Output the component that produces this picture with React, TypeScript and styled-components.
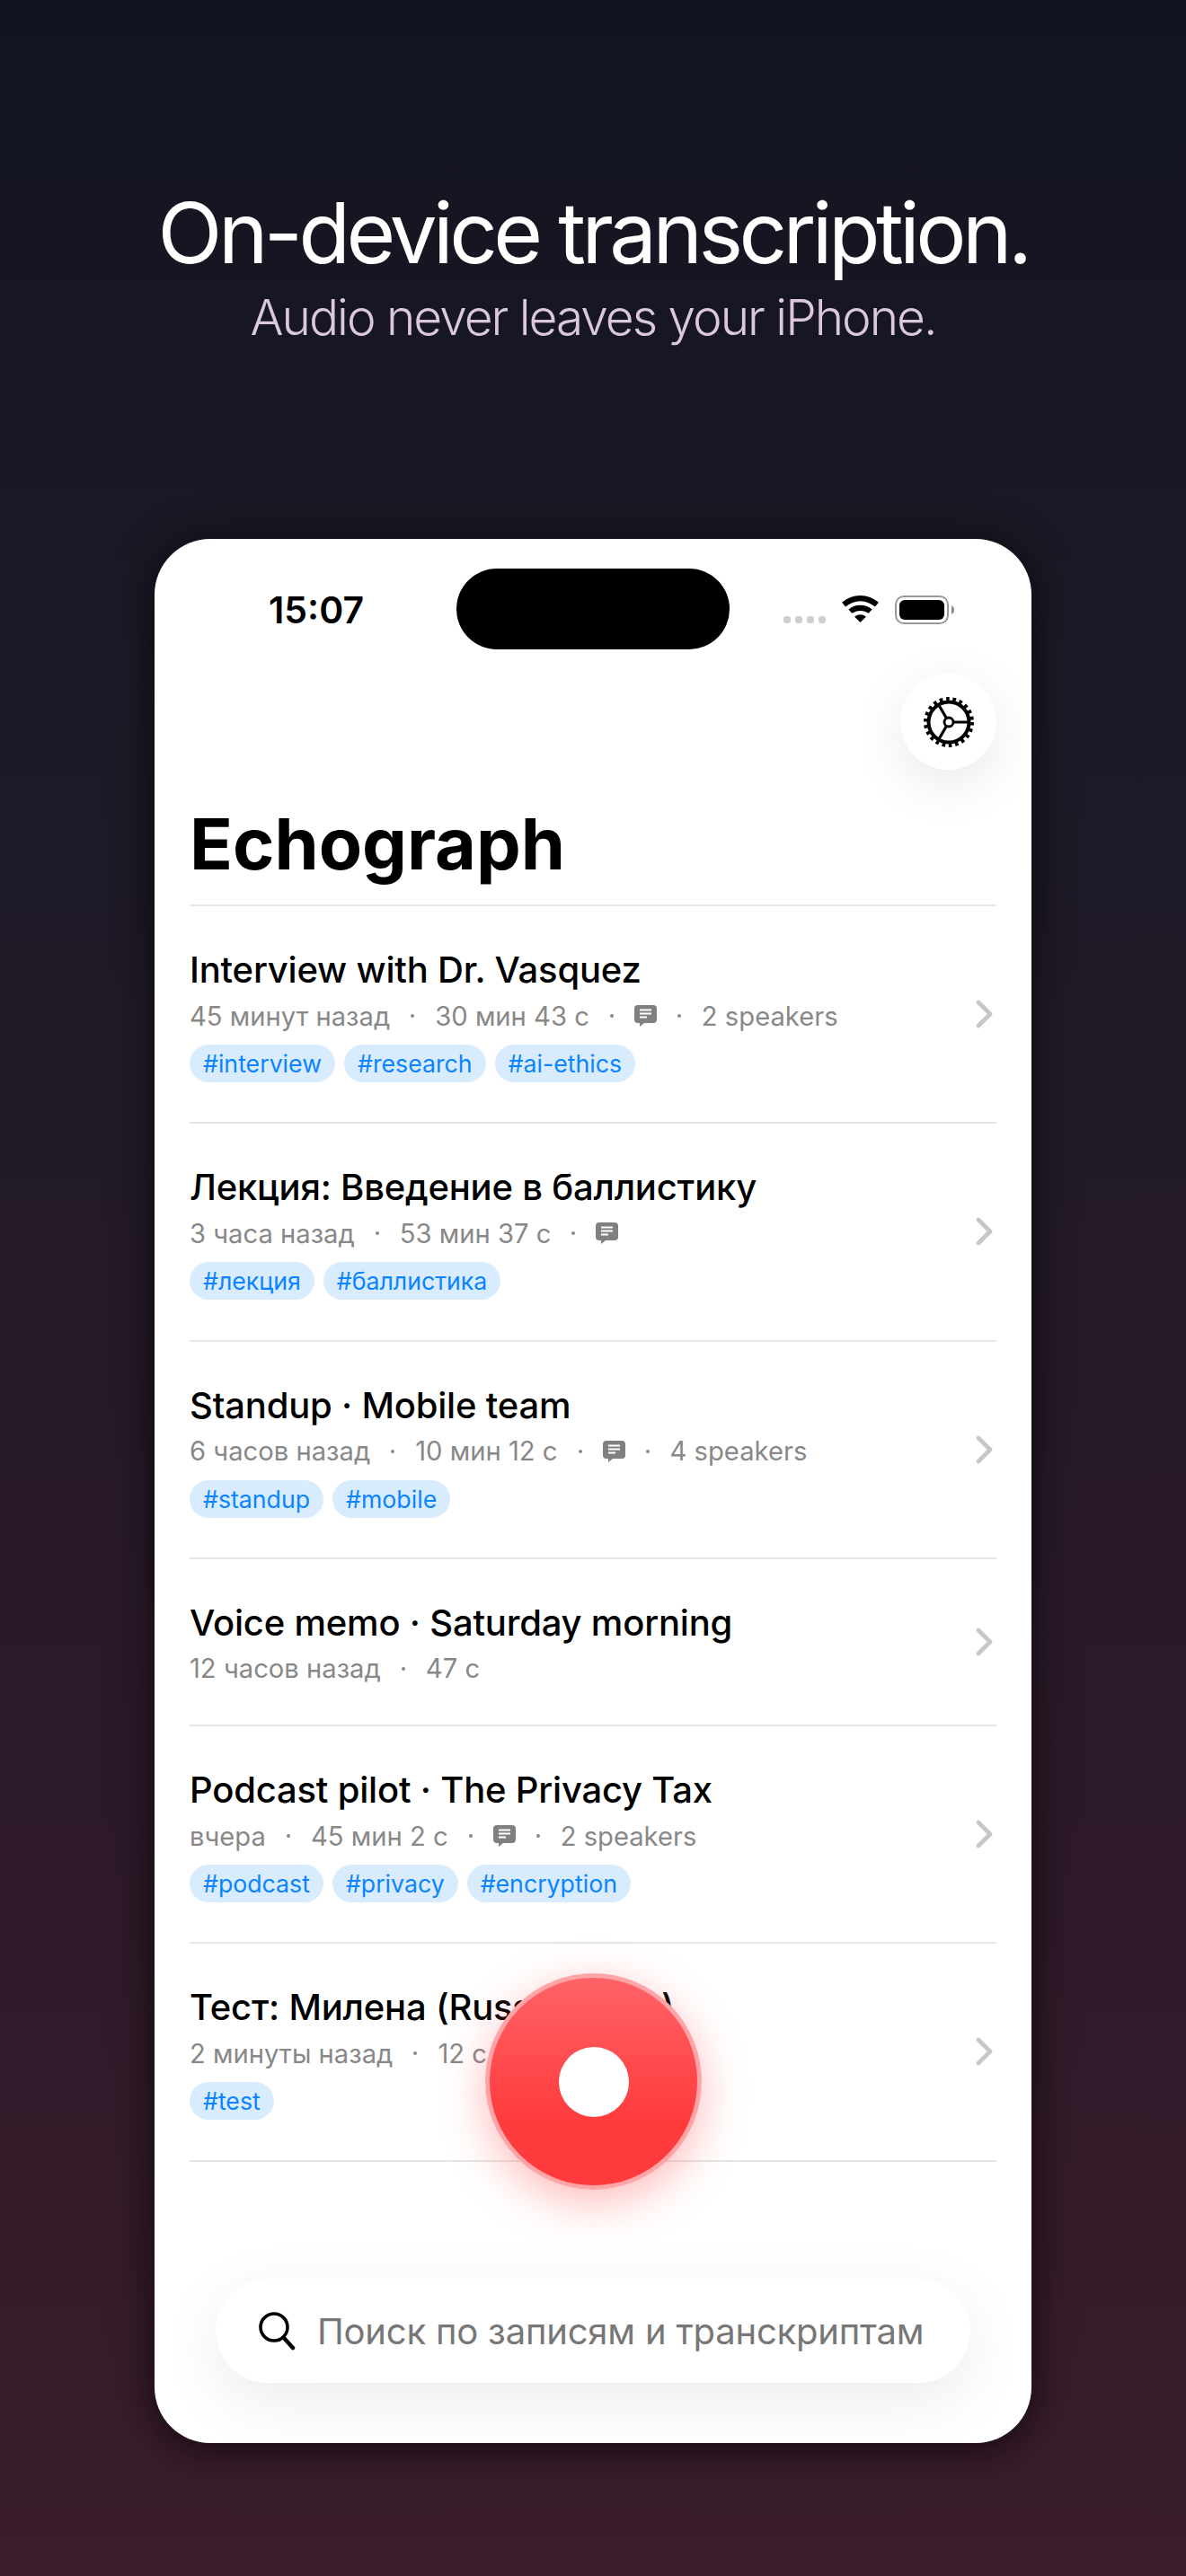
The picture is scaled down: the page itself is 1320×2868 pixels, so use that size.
import React from "react";
import styled, { createGlobalStyle } from "styled-components";

const GlobalStyle = createGlobalStyle`
  html, body {
    margin: 0;
    padding: 0;
  }
  body {
    font-family: Inter, "Noto Sans", sans-serif;
    background: #14161f;
  }
  * {
    box-sizing: border-box;
  }
`;

const Page = styled.div`
  width: 1320px;
  height: 2868px;
  overflow: hidden;
  display: flex;
  flex-direction: column;
  align-items: center;
  background: linear-gradient(180deg, #12141f 0%, #1b1a27 25%, #2d1a29 70%, #3b1d2c 100%);
`;

const Hero = styled.header`
  height: 600px;
  padding-top: 202px;
  text-align: center;
`;

const Headline = styled.h1`
  margin: 0;
  color: #fff;
  font-size: 94px;
  font-weight: 400;
  line-height: 114px;
  letter-spacing: -4.6px;
  white-space: nowrap;
`;

const Subline = styled.p`
  margin: 4px 0 0;
  color: #dcc8dc;
  font-size: 55px;
  font-weight: 350;
  line-height: 66px;
  letter-spacing: -2px;
  white-space: nowrap;
`;

const Phone = styled.main`
  position: relative;
  width: 976px;
  height: 2120px;
  flex: none;
  padding: 0 39px;
  background: #fff;
  border-radius: 62px;
  overflow: hidden;
  box-shadow: 0 6px 48px rgba(0, 0, 0, 0.7);
`;

const StatusBar = styled.div`
  display: grid;
  grid-template-columns: 1fr 304px 1fr;
  height: 123px;
  padding-top: 33px;
  margin: 0 -39px;
`;

const Clock = styled.span`
  padding: 24px 0 0 127px;
  font-size: 41px;
  font-weight: 600;
  line-height: 44px;
  color: #000;
`;

const Island = styled.div`
  height: 90px;
  border-radius: 45px;
  background: #000;
`;

const StatusIcons = styled.div`
  display: flex;
  align-items: flex-start;
  padding: 30px 0 0 60px;
`;

const SignalDots = styled.div`
  display: flex;
  gap: 5px;
  margin: 23px 18px 0 0;
`;

const SignalDot = styled.span`
  width: 8px;
  height: 8px;
  border-radius: 3px;
  background: #cfcfcf;
`;

const Toolbar = styled.div`
  display: flex;
  justify-content: flex-end;
  padding-top: 27px;
`;

const SettingsButton = styled.button`
  width: 107px;
  height: 107px;
  padding: 0;
  border: 0;
  border-radius: 50%;
  display: flex;
  align-items: center;
  justify-content: center;
  background: #fff;
  box-shadow: 0 16px 60px rgba(0, 0, 0, 0.09);
`;

const Title = styled.h2`
  margin: 35px 0 0;
  height: 117px;
  font-size: 79px;
  font-weight: 700;
  line-height: 94px;
  color: #000;
  border-bottom: 2px solid #e6e6e6;
`;

const Row = styled.div`
  display: flex;
  align-items: center;
  justify-content: space-between;
  padding: 44px 0 44.3px;
  border-bottom: 2px solid #e6e6e6;
`;

const RowBody = styled.div`
  min-width: 0;
`;

const RowTitle = styled.div`
  font-size: 40px;
  font-weight: 450;
  line-height: 54px;
  letter-spacing: -0.2px;
  color: #000;
  white-space: nowrap;
`;

const Meta = styled.div`
  display: flex;
  align-items: center;
  gap: 23px;
  margin-top: 6px;
  height: 36px;
  font-size: 29.2px;
  color: #888;
  white-space: nowrap;
`;

const MetaDot = styled.span`
  width: 4px;
  height: 4px;
  border-radius: 50%;
  background: #888;
`;

const Tags = styled.div`
  display: flex;
  gap: 10px;
  margin-top: 14px;
`;

const Tag = styled.span`
  height: 42px;
  padding: 0 15px;
  border-radius: 21px;
  background: #d9ecfe;
  color: #0a84ff;
  font-size: 26.7px;
  line-height: 42px;
  white-space: nowrap;
`;

const ChevronMark = styled.svg`
  margin-right: 3px;
  flex: none;
`;

const RecordButton = styled.button`
  position: absolute;
  left: 368px;
  top: 1597px;
  width: 241px;
  height: 241px;
  padding: 0;
  display: flex;
  align-items: center;
  justify-content: center;
  border: 5px solid #ffa5a7;
  border-radius: 50%;
  background: linear-gradient(180deg, #ff6468 0%, #ff3a3c 70%);
  background-origin: border-box;
  box-shadow: 0 14px 50px rgba(255, 59, 59, 0.35);
`;

const RecordDot = styled.span`
  width: 78px;
  height: 78px;
  border-radius: 50%;
  background: #fff;
`;

const SearchBar = styled.div`
  position: absolute;
  left: 68px;
  right: 68px;
  bottom: 67px;
  height: 116px;
  display: flex;
  align-items: center;
  gap: 24px;
  padding-left: 47px;
  border-radius: 58px;
  background: #fff;
  box-shadow: 0 20px 70px rgba(0, 0, 0, 0.08);
  font-size: 40px;
  letter-spacing: -0.2px;
  color: #777;
  white-space: nowrap;
`;

const Chevron = () => (
  <ChevronMark width="20" height="32" viewBox="0 0 20 32" fill="none">
    <path d="M3 3l13 13L3 29" stroke="#c7c7c7" strokeWidth="4.6" strokeLinecap="round" strokeLinejoin="round" />
  </ChevronMark>
);

const Bubble = () => (
  <svg width="25" height="24" viewBox="0 0 25 24">
    <path d="M4 0h17a4 4 0 0 1 4 4v12a4 4 0 0 1-4 4H11l-5 4v-4H4a4 4 0 0 1-4-4V4a4 4 0 0 1 4-4z" fill="#808080" />
    <path d="M6 5.500h13M6 9.500h13M6 13.500h8" stroke="#fff" strokeWidth="1.800" />
  </svg>
);

const Gear = () => (
  <svg width="58" height="58" viewBox="0 0 58 58" fill="none" stroke="#000">
    <circle cx="29" cy="29" r="25.5" strokeWidth="5" strokeDasharray="3.6 3.68" />
    <circle cx="29" cy="29" r="22.5" strokeWidth="4" />
    <circle cx="29" cy="29" r="5" strokeWidth="2.8" />
    <path d="M34 29h16M26.500 24.700L17 8.500M26.500 33.300L17 49.500" strokeWidth="3.2" />
  </svg>
);

const Wifi = () => (
  <svg width="41" height="31" viewBox="0 0 42 32">
    <path d="M21 0C13 0 6 3 0 8l4 5c5-4 11-6.500 17-6.500S33 9 38 13l4-5C36 3 29 0 21 0z" fill="#000" />
    <path d="M21 11c-5.500 0-10 2-13.500 5l4 4.500C14 18.500 17.500 17.500 21 17.500s7 1 9.500 3l4-4.500C31 13 26.500 11 21 11z" fill="#000" />
    <path d="M21 22c-3 0-5 1-6.500 2.500L21 31l6.500-6.500C26 23 24 22 21 22z" fill="#000" />
  </svg>
);

const BatteryMark = styled.svg`
  margin-left: 18px;
`;

const Battery = () => (
  <BatteryMark width="68" height="32" viewBox="0 0 68 32">
    <rect x="1" y="1" width="58" height="30" rx="9" fill="none" stroke="#999" strokeWidth="2" />
    <rect x="5" y="5" width="50" height="22" rx="6" fill="#000" />
    <path d="M63 11c2 1 3 3 3 5s-1 4-3 5z" fill="#888" />
  </BatteryMark>
);

const SearchIcon = () => (
  <svg width="42" height="44" viewBox="0 0 42 44" fill="none" stroke="#000" strokeLinecap="round">
    <circle cx="18" cy="18" r="15" strokeWidth="3.6" />
    <path d="M29 30l10 11" strokeWidth="4.500" />
  </svg>
);

type Recording = {
  title: string;
  ago: string;
  length: string;
  transcript?: boolean;
  speakers?: string;
  tags?: string[];
};

const recordings: Recording[] = [
  { title: "Interview with Dr. Vasquez", ago: "45 минут назад", length: "30 мин 43 с", transcript: true, speakers: "2 speakers", tags: ["#interview", "#research", "#ai-ethics"] },
  { title: "Лекция: Введение в баллистику", ago: "3 часа назад", length: "53 мин 37 с", transcript: true, tags: ["#лекция", "#баллистика"] },
  { title: "Standup · Mobile team", ago: "6 часов назад", length: "10 мин 12 с", transcript: true, speakers: "4 speakers", tags: ["#standup", "#mobile"] },
  { title: "Voice memo · Saturday morning", ago: "12 часов назад", length: "47 с" },
  { title: "Podcast pilot · The Privacy Tax", ago: "вчера", length: "45 мин 2 с", transcript: true, speakers: "2 speakers", tags: ["#podcast", "#privacy", "#encryption"] },
  { title: "Тест: Милена (Russian TTS)", ago: "2 минуты назад", length: "12 с", transcript: true, tags: ["#test"] },
];

export default function App() {
  return (
    <>
      <GlobalStyle />
      <Page>
        <Hero>
          <Headline>On-device transcription.</Headline>
          <Subline>Audio never leaves your iPhone.</Subline>
        </Hero>
        <Phone>
          <StatusBar>
            <Clock>15:07</Clock>
            <Island />
            <StatusIcons>
              <SignalDots>
                <SignalDot />
                <SignalDot />
                <SignalDot />
                <SignalDot />
              </SignalDots>
              <Wifi />
              <Battery />
            </StatusIcons>
          </StatusBar>
          <Toolbar>
            <SettingsButton>
              <Gear />
            </SettingsButton>
          </Toolbar>
          <Title>Echograph</Title>
          {recordings.map((r) => (
            <Row key={r.title}>
              <RowBody>
                <RowTitle>{r.title}</RowTitle>
                <Meta>
                  <span>{r.ago}</span>
                  <MetaDot />
                  <span>{r.length}</span>
                  {r.transcript && <MetaDot />}
                  {r.transcript && <Bubble />}
                  {r.speakers && <MetaDot />}
                  {r.speakers && <span>{r.speakers}</span>}
                </Meta>
                {r.tags && (
                  <Tags>
                    {r.tags.map((t) => (
                      <Tag key={t}>{t}</Tag>
                    ))}
                  </Tags>
                )}
              </RowBody>
              <Chevron />
            </Row>
          ))}
          <RecordButton>
            <RecordDot />
          </RecordButton>
          <SearchBar>
            <SearchIcon />
            <span>Поиск по записям и транскриптам</span>
          </SearchBar>
        </Phone>
      </Page>
    </>
  );
}
